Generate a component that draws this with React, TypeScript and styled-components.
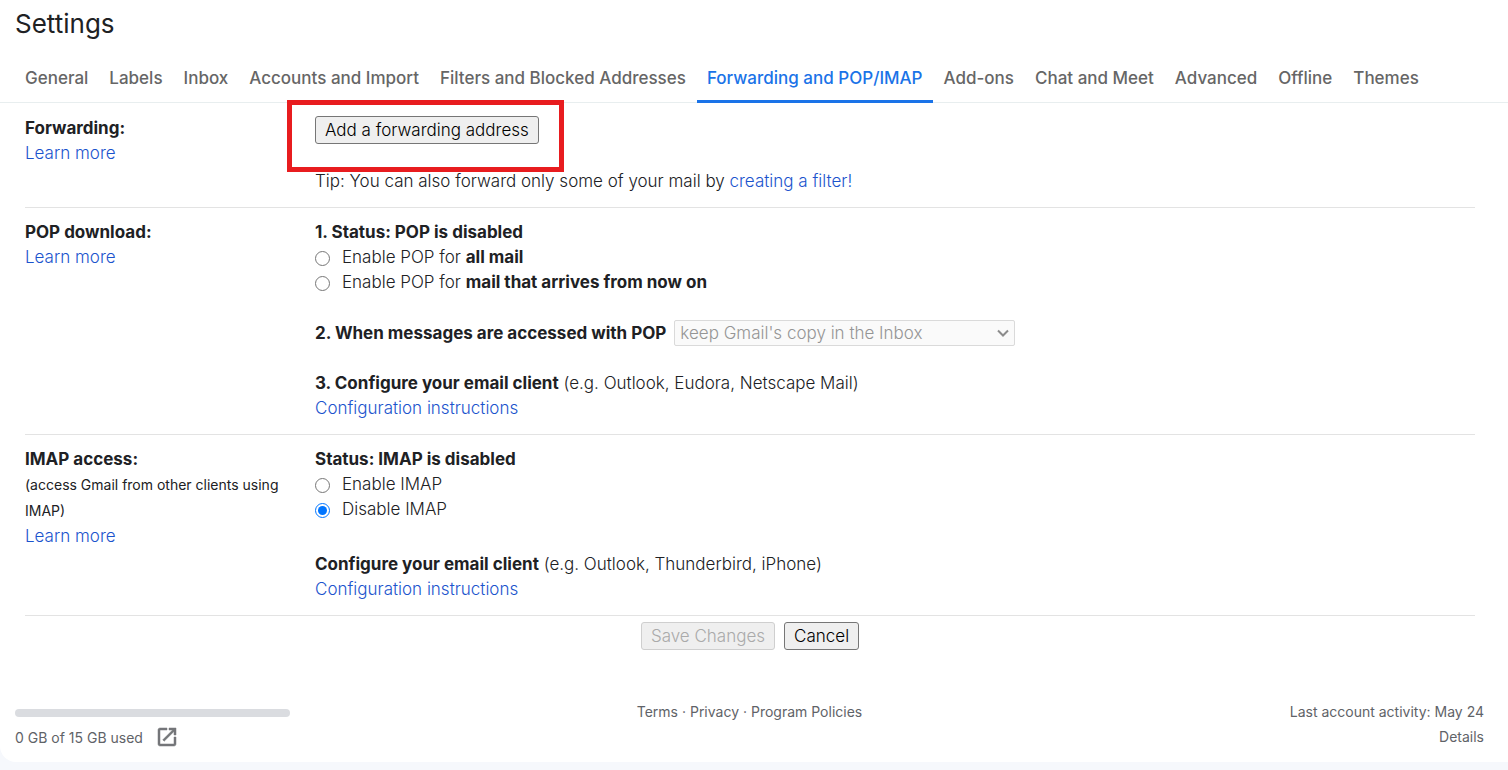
import React from 'react';
import styled, { createGlobalStyle } from 'styled-components';

const GlobalStyle = createGlobalStyle`
  *, *::before, *::after { box-sizing: border-box; }
  body {
    margin: 0;
    background: #f6f8fc;
    color: #202124;
    font-family: Inter, Roboto, sans-serif;
    font-size: 17px;
    font-weight: 300;
    line-height: 25px;
  }
  button, input, select { font: inherit; }
`;

const Page = styled.main`
  background: #fff;
  border-radius: 0 0 0 16px;
  padding-bottom: 6px;
`;

const Title = styled.h1`
  margin: 0;
  padding: 8px 15px 0;
  font-size: 26px;
  line-height: 32px;
  font-weight: 400;
`;

const Tabs = styled.nav`
  display: flex;
  gap: 1px;
  margin-top: 12px;
  padding-left: 15px;
  border-bottom: 1px solid #e8eeef;
`;

const Tab = styled.a<{ $active?: boolean }>`
  padding: 15px 10px 10px;
  margin-bottom: -1px;
  border-bottom: 3px solid ${(p) => (p.$active ? '#1a73e8' : 'transparent')};
  color: ${(p) => (p.$active ? '#1a73e8' : '#666')};
  font-weight: 500;
  line-height: 23px;
  text-decoration: none;
  white-space: nowrap;
`;

const Sections = styled.div`
  padding: 1px 33px 0 25px;
`;

const Section = styled.section`
  display: grid;
  grid-template-columns: 270px 1fr;
  column-gap: 20px;
  padding: 12px 0 13px;
  border-bottom: 1px solid #e3e3e3;
`;

const Heading = styled.h2`
  margin: 0;
  font-size: inherit;
  font-weight: 700;
`;

const Strong = styled.b`
  font-weight: 700;
`;

const Note = styled.p`
  margin: 0;
  font-size: 14px;
  font-weight: 400;
  line-height: 26px;
`;

const Link = styled.a`
  color: #1b54cd;
  text-decoration: none;
`;

const Line = styled.p`
  margin: 0;
`;

const Block = styled.div`
  & + & { margin-top: 25px; }
`;

const WideBlock = styled(Block)`
  && { margin-top: 30px; }
`;

const Button = styled.button`
  height: 28px;
  padding: 0 9px;
  border: 1px solid #767676;
  border-radius: 3px;
  background: #efefef;
  color: #000;
  line-height: 24px;
  &:disabled {
    border-color: #cfcfcf;
    color: #aaa;
  }
`;

const Callout = styled.div`
  position: relative;
  display: flex;
  padding-bottom: 25px;
  &::after {
    content: '';
    position: absolute;
    top: -16px;
    left: -28px;
    width: 277px;
    height: 72px;
    border: 5px solid #e81c1f;
    pointer-events: none;
  }
`;

const Option = styled.label`
  display: flex;
  align-items: center;
  gap: 12px;
`;

const Radio = styled.input`
  width: 15px;
  height: 15px;
  margin: 1px 0 0;
  accent-color: #0075ff;
`;

const SelectRow = styled.div`
  display: flex;
  align-items: center;
  gap: 8px;
`;

const SelectLabel = styled.label`
  font-weight: 700;
`;

const SelectBox = styled.div`
  position: relative;
  display: flex;
`;

const Select = styled.select`
  appearance: none;
  width: 341px;
  height: 26px;
  padding: 0 24px 0 5px;
  border: 1px solid #dadada;
  border-radius: 2px;
  background: #fafafa;
  color: #959595;
  opacity: 1;
`;

const Chevron = styled.svg`
  position: absolute;
  right: 6px;
  top: 9px;
  pointer-events: none;
`;

const Actions = styled.div`
  display: flex;
  justify-content: center;
  gap: 9px;
  padding-top: 6px;
`;

const Footer = styled.footer`
  display: grid;
  grid-template-columns: 1fr auto 1fr;
  margin-top: 49px;
  padding: 0 24px 0 15px;
  color: #5f6368;
  font-size: 14px;
  font-weight: 400;
`;

const Storage = styled.div`
  width: 275px;
  padding-top: 10px;
`;

const Meter = styled.div`
  height: 8px;
  border-radius: 4px;
  background: #dadce0;
`;

const Usage = styled.div`
  display: flex;
  gap: 12px;
  margin-top: 8px;
`;

const FooterLink = styled.a`
  color: inherit;
  text-decoration: none;
`;

const Activity = styled.div`
  text-align: right;
`;

const tabs = [
  'General', 'Labels', 'Inbox', 'Accounts and Import', 'Filters and Blocked Addresses',
  'Forwarding and POP/IMAP', 'Add-ons', 'Chat and Meet', 'Advanced', 'Offline', 'Themes',
];

export default function App() {
  return (
    <>
      <GlobalStyle />
      <Page>
        <Title>Settings</Title>
        <Tabs>
          {tabs.map((t) => (
            <Tab key={t} href="#" $active={t === 'Forwarding and POP/IMAP'}>{t}</Tab>
          ))}
        </Tabs>
        <Sections>
          <Section>
            <div>
              <Heading>Forwarding:</Heading>
              <Link href="#">Learn more</Link>
            </div>
            <div>
              <Callout><Button type="button">Add a forwarding address</Button></Callout>
              <Line>Tip: You can also forward only some of your mail by <Link href="#">creating a filter!</Link></Line>
            </div>
          </Section>
          <Section>
            <div>
              <Heading>POP download:</Heading>
              <Link href="#">Learn more</Link>
            </div>
            <div>
              <Block>
                <Line><Strong>1. Status: POP is disabled</Strong></Line>
                <Option><Radio type="radio" name="pop" /><span>Enable POP for <Strong>all mail</Strong></span></Option>
                <Option><Radio type="radio" name="pop" /><span>Enable POP for <Strong>mail that arrives from now on</Strong></span></Option>
              </Block>
              <Block>
                <SelectRow>
                  <SelectLabel htmlFor="pop-action">2. When messages are accessed with POP</SelectLabel>
                  <SelectBox>
                    <Select id="pop-action" disabled><option>keep Gmail's copy in the Inbox</option></Select>
                    <Chevron width="12" height="9" viewBox="0 0 12 9" fill="none" stroke="#8c8c8c" strokeWidth="2">
                      <path d="M1 1.5 6 6.5 11 1.5" />
                    </Chevron>
                  </SelectBox>
                </SelectRow>
              </Block>
              <Block>
                <Line><Strong>3. Configure your email client</Strong> (e.g. Outlook, Eudora, Netscape Mail)</Line>
                <Link href="#">Configuration instructions</Link>
              </Block>
            </div>
          </Section>
          <Section>
            <div>
              <Heading>IMAP access:</Heading>
              <Note>(access Gmail from other clients using IMAP)</Note>
              <Link href="#">Learn more</Link>
            </div>
            <div>
              <Block>
                <Line><Strong>Status: IMAP is disabled</Strong></Line>
                <Option><Radio type="radio" name="imap" /><span>Enable IMAP</span></Option>
                <Option><Radio type="radio" name="imap" defaultChecked /><span>Disable IMAP</span></Option>
              </Block>
              <WideBlock>
                <Line><Strong>Configure your email client</Strong> (e.g. Outlook, Thunderbird, iPhone)</Line>
                <Link href="#">Configuration instructions</Link>
              </WideBlock>
            </div>
          </Section>
          <Actions>
            <Button type="button" disabled>Save Changes</Button>
            <Button type="button">Cancel</Button>
          </Actions>
        </Sections>
        <Footer>
          <Storage>
            <Meter />
            <Usage>
              <span>0 GB of 15 GB used</span>
              <FooterLink href="#" aria-label="Manage storage">
                <svg width="24" height="24" viewBox="0 0 24 24" fill="#747679" stroke="#747679" strokeWidth="0.5">
                  <path d="M19 19H5V5h7V3H5c-1.110 0-2 .9-2 2v14c0 1.100.89 2 2 2h14c1.100 0 2-.9 2-2v-7h-2v7zM14 3v2h3.590l-9.830 9.830 1.410 1.410L19 6.410V10h2V3h-7z" />
                </svg>
              </FooterLink>
            </Usage>
          </Storage>
          <div>
            <FooterLink href="#">Terms</FooterLink> · <FooterLink href="#">Privacy</FooterLink> · <FooterLink href="#">Program Policies</FooterLink>
          </div>
          <Activity>
            <div>Last account activity: May 24</div>
            <FooterLink href="#">Details</FooterLink>
          </Activity>
        </Footer>
      </Page>
    </>
  );
}
